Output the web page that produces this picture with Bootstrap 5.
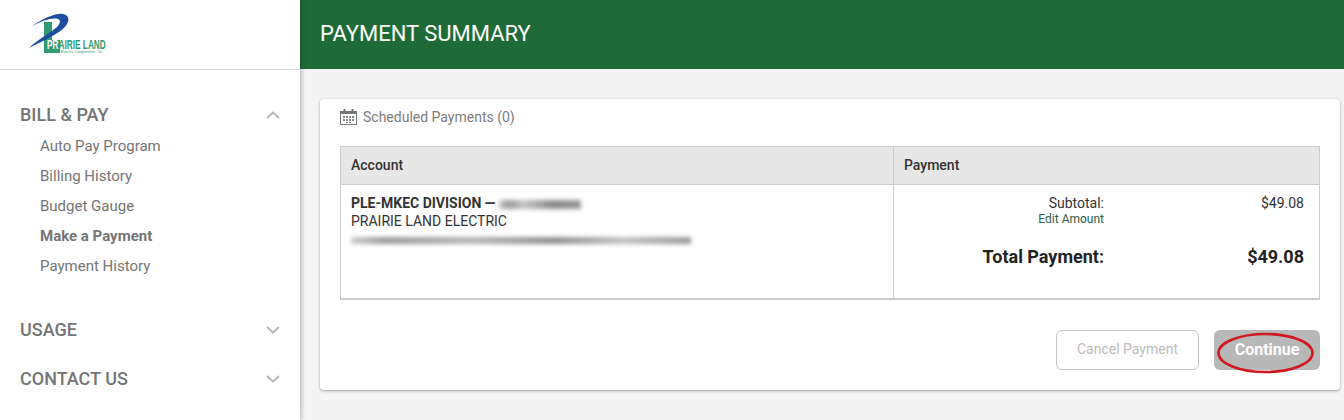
<!DOCTYPE html>
<html lang="en">
<head>
  <meta charset="UTF-8" />
  <title>Payment Summary</title>
  <link href="https://cdn.jsdelivr.net/npm/bootstrap@5.3.0/dist/css/bootstrap.min.css" rel="stylesheet" />
  <style>
    html, body { height: 420px; overflow: hidden; }
    body { font-family: Roboto, "Liberation Sans", sans-serif; background: #f4f4f4; color: #333; font-size: 14px; }
    .side-panel { width: 300px; height: 420px; background: #fff; box-shadow: 1px 0 5px rgba(0,0,0,.3); z-index: 2; flex: none; }
    .logo-box { height: 70px; border-bottom: 1px solid #d9d9d9; padding: 13px 0 0 28px; }
    .side-nav { padding: 25px 20px 0; }
    .nav-head { font-size: 18px; font-weight: 500; color: #757575; height: 40px; line-height: 40px; }
    .nav-links { padding-left: 20px; margin-top: -4px; margin-bottom: 29px; }
    .nav-links a { display: block; height: 30px; line-height: 30px; font-size: 15px; color: #757575; text-decoration: none; }
    .nav-links a.active-link { font-weight: 700; }
    .nav-gap { margin-bottom: 9px; }
    .top-bar { height: 69px; background: #1e6b37; color: #fff; font-size: 22px; padding: 0 0 2px 20px; }
    .pay-card { margin: 30px 4px 0 20px; height: 291px; background: #fff; border-radius: 4px; box-shadow: 0 1px 3px rgba(0,0,0,.35); padding: 0 20px; }
    .card-title-row { height: 47px; color: #7d7d7d; font-size: 14px; gap: 6px; padding-bottom: 11px; }
    .pay-table { margin: 0; table-layout: fixed; border-color: #ccc; color: #333; }
    .pay-table th { background: #e7e7e7; font-weight: 500; height: 38px; padding: 0 10px; vertical-align: middle; font-size: 14px; color: #333; }
    .pay-table td { height: 114px; padding: 9px 15px 9px 10px; vertical-align: top; line-height: 18px; border-bottom-width: 2px; }
    .col-account { width: 553px; }
    .smudge { display: inline-block; height: 9px; background: linear-gradient(90deg, #ccc, #999 12%, #c4c4c4 30%, #8a8a8a 65%, #999); filter: blur(2px); vertical-align: middle; }
    .smudge-id { width: 82px; }
    .smudge-addr { width: 340px; margin-top: 7px; display: block; height: 7px; background: linear-gradient(90deg, #ccc, #999 10%, #b5b5b5 35%, #8f8f8f 60%, #c0c0c0 80%, #999); }
    .amount-label { width: 200px; text-align: right; }
    .edit-link { font-size: 12px; color: #2a5d46; text-decoration: none; display: block; line-height: 14px; }
    .total-row { font-size: 18px; font-weight: 700; margin-top: 19px; line-height: 24px; color: #222; }
    .btn-cancel { width: 143px; height: 40px; border: 1px solid #c4c4c4; color: #bcbcbc; background: #fff; font-size: 14px; }
    .btn-continue { width: 106px; height: 40px; background: #b8b8b8; color: #fff; font-weight: 700; font-size: 16px; border: 0; }
    .btn-wrap { margin-top: 30px; gap: 15px; }
    .red-ring { position: absolute; left: 3px; top: 2px; pointer-events: none; }
  </style>
</head>
<body class="d-flex">
  <!-- Sidebar -->
  <div class="side-panel">
    <div class="logo-box">
      <svg width="90" height="46" viewBox="0 0 90 46">
        <rect x="16" y="9" width="8" height="31" fill="#2e9b72" />
        <rect x="16" y="27" width="16" height="13" fill="#2e9b72" />
        <path d="M4 13C16 5 28 0 35 1C42 2 42 9 36 15C29 22 14 28 1 35C9 27 22 20 29 14C33 10 33 6 28 5.500C22 5 13 8 4 13Z" fill="#1f4e9e" />
        <text transform="translate(19 36) scale(.69 1)" font-family="Liberation Sans" font-size="12" font-weight="700" fill="#2e9b72"><tspan fill="#fff">PR</tspan>AIRIE LAND</text>
        <text transform="translate(33 40) scale(1.1 1)" font-family="Liberation Sans" font-size="3.500" fill="#2e9b72">Electric Cooperative, Inc.</text>
      </svg>
    </div>
    <div class="side-nav">
      <div class="nav-head d-flex justify-content-between align-items-center">
        <span>BILL &amp; PAY</span>
        <svg width="14" height="8" viewBox="0 0 14 8"><path d="M1 7 7 1.500 13 7" fill="none" stroke="#b5b5b5" stroke-width="1.800" /></svg>
      </div>
      <div class="nav-links">
        <a href="#">Auto Pay Program</a>
        <a href="#">Billing History</a>
        <a href="#">Budget Gauge</a>
        <a href="#" class="active-link">Make a Payment</a>
        <a href="#">Payment History</a>
      </div>
      <div class="nav-head nav-gap d-flex justify-content-between align-items-center">
        <span>USAGE</span>
        <svg width="14" height="8" viewBox="0 0 14 8"><path d="M1 1 7 6.500 13 1" fill="none" stroke="#b5b5b5" stroke-width="1.800" /></svg>
      </div>
      <div class="nav-head d-flex justify-content-between align-items-center">
        <span>CONTACT US</span>
        <svg width="14" height="8" viewBox="0 0 14 8"><path d="M1 1 7 6.500 13 1" fill="none" stroke="#b5b5b5" stroke-width="1.800" /></svg>
      </div>
    </div>
  </div>

  <!-- Main -->
  <div class="flex-grow-1">
    <div class="top-bar d-flex align-items-center">PAYMENT SUMMARY</div>
    <div class="pay-card">
      <div class="card-title-row d-flex align-items-center">
        <svg width="17" height="16" viewBox="0 0 17 16">
          <rect x=".5" y="2.500" width="16" height="13" fill="#fff" stroke="#777" />
          <rect x="1" y="2" width="15" height="3" fill="#777" />
          <rect x="3.500" y="0" width="2" height="3" fill="#777" />
          <rect x="11.500" y="0" width="2" height="3" fill="#777" />
          <path d="M3 7h2v2H3zM6 7h2v2H6zM9 7h2v2H9zM12 7h2v2h-2zM3 10h2v2H3zM6 10h2v2H6zM9 10h2v2H9zM12 10h2v2h-2zM6 13h2v1H6zM9 13h2v1H9z" fill="#888" />
        </svg>
        <span>Scheduled Payments (0)</span>
      </div>
      <table class="table table-bordered pay-table">
        <thead>
          <tr>
            <th class="col-account">Account</th>
            <th>Payment</th>
          </tr>
        </thead>
        <tbody>
          <tr>
            <td>
              <div class="fw-bold">PLE-MKEC DIVISION &mdash; <span class="smudge smudge-id"></span></div>
              <div>PRAIRIE LAND ELECTRIC</div>
              <span class="smudge smudge-addr"></span>
            </td>
            <td>
              <div class="d-flex justify-content-between">
                <div class="amount-label">Subtotal:<a href="#" class="edit-link">Edit Amount</a></div>
                <div>$49.08</div>
              </div>
              <div class="d-flex justify-content-between total-row">
                <div class="amount-label">Total Payment:</div>
                <div>$49.08</div>
              </div>
            </td>
          </tr>
        </tbody>
      </table>
      <div class="d-flex justify-content-end btn-wrap">
        <button type="button" class="btn btn-cancel">Cancel Payment</button>
        <div class="position-relative">
          <button type="button" class="btn btn-continue">Continue</button>
          <svg class="red-ring" width="98" height="42" viewBox="0 0 98 42">
            <ellipse cx="48.500" cy="21" rx="47" ry="19" fill="none" stroke="#d01920" stroke-width="2.600" />
          </svg>
        </div>
      </div>
    </div>
  </div>

  <script src="https://cdn.jsdelivr.net/npm/bootstrap@5.3.0/dist/js/bootstrap.bundle.min.js"></script>
</body>
</html>
